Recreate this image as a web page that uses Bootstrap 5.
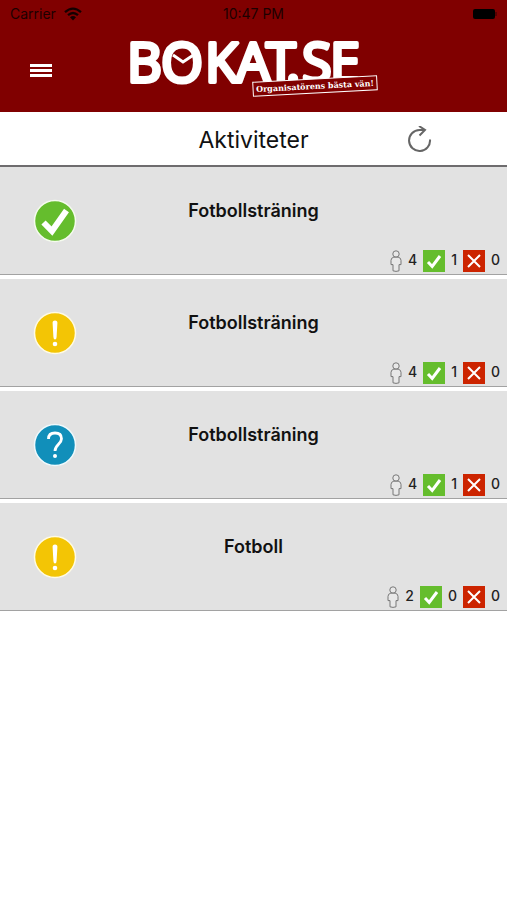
<!DOCTYPE html>
<html lang="sv">
<head>
<meta charset="utf-8">
<meta name="viewport" content="width=device-width, initial-scale=1">
<title>Bokat.se – Aktiviteter</title>
<link href="https://cdn.jsdelivr.net/npm/bootstrap@5.3.0/dist/css/bootstrap.min.css" rel="stylesheet">
<style>
body { font-family: Inter, "Liberation Sans", sans-serif; color: #111; background: #fff; }
svg { display: block; }
.top-area { background: #800000; height: 112px; }
.status-line { height: 28px; font-size: 14px; line-height: 28px; color: #1c0000; padding: 0 10px; }
.brand-line { height: 84px; }
.logo { overflow: visible; }
.side-slot { flex: 1 1 0; }
.menu-btn { padding: 4px; margin-left: 26px; }
.page-head { height: 55px; border-bottom: 2px solid #6e6c6e; }
.page-head h1 { font-size: 23px; line-height: 32px; font-weight: 400; padding-top: 2px; }
.reload-btn { padding: 4px; margin-left: 94px; }
.activity { height: 108px; background: #e2e2e2; border-bottom: 1px solid #a2a2a2; margin-bottom: 4px; color: #111; }
.activity:hover { color: #111; }
.state-slot { width: 110px; padding-top: 32px; padding-left: 33px; }
.activity-name { font-size: 18px; line-height: 24px; font-weight: 600; padding-top: 32px; }
.counts { font-size: 14px; line-height: 20px; font-weight: 500; right: 7px; bottom: 2px; color: #222; gap: 6px; }
.counts > span { gap: 6px; }
</style>
<script src="https://cdn.jsdelivr.net/npm/bootstrap@5.3.0/dist/js/bootstrap.bundle.min.js" defer></script>
</head>
<body>
<svg width="0" height="0" class="position-absolute" aria-hidden="true">
  <defs>
    <symbol id="person" viewBox="0 0 12 22"><g fill="#e8e8e8" stroke="#777" stroke-width="1"><circle cx="6" cy="4" r="3.2"/><path d="M3.8 7.2h4.4q2.8.5 2.8 3.2v4.2h-2v6.2q-3 1.2-6 0v-6.2h-2v-4.2q0-2.700 2.800-3.200z"/></g></symbol>
    <symbol id="yes" viewBox="0 0 22 22"><path fill="#65bd2d" d="M0 0h22v22H0z"/><path d="M5 12l4.200 4.500L17 6" fill="none" stroke="#fff" stroke-width="3"/></symbol>
    <symbol id="no" viewBox="0 0 22 22"><path fill="#cc2400" d="M0 0h22v22H0z"/><path d="M5 5l12 12M17 5L5 17" fill="none" stroke="#fff" stroke-width="2"/></symbol>
    <symbol id="st-ok" viewBox="0 0 44 44"><circle cx="22" cy="22" r="20.500" fill="#65bd2d" stroke="#f5fbee" stroke-width="1.500"/><path d="M10.500 23.500l8.500 8.500L33.500 11.500" fill="none" stroke="#fff" stroke-width="6"/></symbol>
    <symbol id="st-warn" viewBox="0 0 44 44"><circle cx="22" cy="22" r="20.500" fill="#f3c505" stroke="#fffbe4" stroke-width="1.500"/><path d="M22 9.500q2.600 0 2.400 2.500l-.8 14q-.2 2.500-1.600 2.500t-1.600-2.500l-.8-14q-.2-2.500 2.400-2.500z" fill="#fff"/><circle cx="22" cy="33" r="2.300" fill="#fff"/></symbol>
    <symbol id="st-ask" viewBox="0 0 44 44"><circle cx="22" cy="22" r="20.500" fill="#118fba" stroke="#eff9fc" stroke-width="1.500"/><path d="M15.500 16q0-6 6.500-6t6.500 5.700c0 5.300-6.500 5.800-6.500 12.300" fill="none" stroke="#fff" stroke-width="2.800"/><circle cx="22" cy="33" r="2" fill="#fff"/></symbol>
  </defs>
</svg>

<header class="top-area">
  <div class="status-line d-flex">
    <div class="side-slot d-flex align-items-center gap-2"><span>Carrier</span>
      <svg width="18" height="14" viewBox="0 0 18 14" aria-hidden="true"><g fill="none" stroke="#140000" stroke-width="2.300"><path d="M1 5.200q8-7.200 16 0M4 8.200q5-4.400 10 0"/></g><path d="M6 10.200q3-2.400 6 0L9 13.500z" fill="#140000"/></svg>
    </div>
    <span>10:47 PM</span>
    <div class="side-slot d-flex align-items-center justify-content-end"><svg width="24" height="10" viewBox="0 0 24 10" aria-hidden="true"><rect width="22" height="10" rx="2" fill="#000"/><path d="M23 3v4" stroke="#300000"/></svg></div>
  </div>
  <div class="brand-line d-flex">
    <div class="side-slot pt-4"><button type="button" class="btn border-0 menu-btn mt-2" aria-label="Meny"><svg width="22" height="14" viewBox="0 0 22 14"><path d="M0 1.500h22M0 6.500h22M0 11.500h22" stroke="#fff" stroke-width="3"/></svg></button></div>
    <a href="#" aria-label="Bokat.se"><svg class="logo" width="250" height="76" viewBox="0 0 250 76">
      <g fill="#fff" stroke="#fff" stroke-width="4" stroke-linejoin="round" font-family="'Open Sans', sans-serif" font-weight="400" font-size="54">
        <text y="54" x="-2 32 76 107 137 157 173 201">BOKAT.SE</text>
      </g>
      <path d="M44 27l10 7 12-8" fill="none" stroke="#fff" stroke-width="3"/>
      <g transform="rotate(-3 186 58)"><rect x="124" y="51" width="124" height="14" fill="#800000" stroke="#fff" stroke-width="1"/>
      <text x="186" y="61" text-anchor="middle" fill="#fff" font-family="DejaVu Serif, serif" font-size="8" font-weight="700">Organisatörens bästa vän!</text></g>
    </svg></a>
    <div class="side-slot"></div>
  </div>
</header>

<section class="page-head d-flex align-items-center">
  <div class="side-slot"></div>
  <h1 class="m-0">Aktiviteter</h1>
  <div class="side-slot"><button type="button" class="btn border-0 reload-btn" aria-label="Uppdatera"><svg width="26" height="26" viewBox="0 0 26 26" fill="none" stroke="#666" stroke-width="2"><path d="M23 13.500a10.500 10.500 0 1 1-10.500-9.500h5M12 0l6 4-5.500 5.500"/></svg></button></div>
</section>

<main>
  <a href="#" class="activity d-flex position-relative text-decoration-none">
    <span class="state-slot"><svg width="44" height="44"><use href="#st-ok"/></svg></span>
    <span class="activity-name flex-grow-1 text-center">Fotbollsträning</span>
    <span class="state-slot"></span>
    <span class="counts position-absolute d-flex"><span class="d-flex"><svg width="12" height="22"><use href="#person"/></svg>4</span><span class="d-flex"><svg width="22" height="22"><use href="#yes"/></svg>1</span><span class="d-flex"><svg width="22" height="22"><use href="#no"/></svg>0</span></span>
  </a>
  <a href="#" class="activity d-flex position-relative text-decoration-none">
    <span class="state-slot"><svg width="44" height="44"><use href="#st-warn"/></svg></span>
    <span class="activity-name flex-grow-1 text-center">Fotbollsträning</span>
    <span class="state-slot"></span>
    <span class="counts position-absolute d-flex"><span class="d-flex"><svg width="12" height="22"><use href="#person"/></svg>4</span><span class="d-flex"><svg width="22" height="22"><use href="#yes"/></svg>1</span><span class="d-flex"><svg width="22" height="22"><use href="#no"/></svg>0</span></span>
  </a>
  <a href="#" class="activity d-flex position-relative text-decoration-none">
    <span class="state-slot"><svg width="44" height="44"><use href="#st-ask"/></svg></span>
    <span class="activity-name flex-grow-1 text-center">Fotbollsträning</span>
    <span class="state-slot"></span>
    <span class="counts position-absolute d-flex"><span class="d-flex"><svg width="12" height="22"><use href="#person"/></svg>4</span><span class="d-flex"><svg width="22" height="22"><use href="#yes"/></svg>1</span><span class="d-flex"><svg width="22" height="22"><use href="#no"/></svg>0</span></span>
  </a>
  <a href="#" class="activity d-flex position-relative text-decoration-none">
    <span class="state-slot"><svg width="44" height="44"><use href="#st-warn"/></svg></span>
    <span class="activity-name flex-grow-1 text-center">Fotboll</span>
    <span class="state-slot"></span>
    <span class="counts position-absolute d-flex"><span class="d-flex"><svg width="12" height="22"><use href="#person"/></svg>2</span><span class="d-flex"><svg width="22" height="22"><use href="#yes"/></svg>0</span><span class="d-flex"><svg width="22" height="22"><use href="#no"/></svg>0</span></span>
  </a>
</main>
</body>
</html>
